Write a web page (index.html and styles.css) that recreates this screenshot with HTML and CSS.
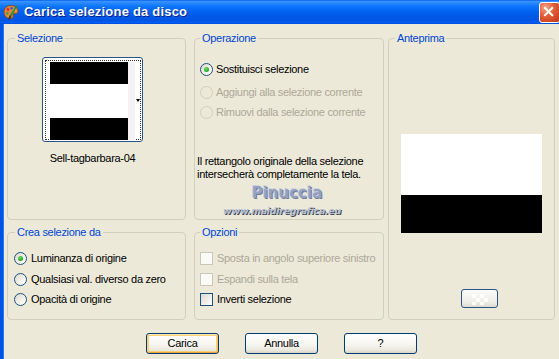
FILE: index.html
```html
<!DOCTYPE html>
<html lang="it">
<head>
<meta charset="utf-8">
<title>Carica selezione da disco</title>
<link rel="stylesheet" href="styles.css">
</head>
<body>
<div class="window">
  <div class="titlebar">
    <svg class="app-icon" viewBox="0 0 16 16" width="16" height="16">
      <path d="M8 1.5c4 0 7 2.4 7 5.6 0 2.2-1.7 2.9-3.2 2.5-1.3-.3-2 .4-1.6 1.6.5 1.5-.6 3.3-3 3.3C3.6 14.5 1 11.6 1 8S3.9 1.5 8 1.5z" fill="#e0883a" stroke="#8a3f12" stroke-width="0.8"/>
      <circle cx="5" cy="5.5" r="1.4" fill="#e8262a"/>
      <circle cx="8.6" cy="4.3" r="1.3" fill="#2a5ce8"/>
      <circle cx="11.8" cy="5.8" r="1.2" fill="#f7e13a"/>
      <circle cx="4.3" cy="9.4" r="1.3" fill="#3aa63a"/>
      <path d="M13.5 2.5 7.2 12.6" stroke="#2f8c3a" stroke-width="1.8" stroke-linecap="round"/>
      <path d="M7.4 12.2 6.2 14.6" stroke="#333" stroke-width="1.6" stroke-linecap="round"/>
    </svg>
    <span class="title">Carica selezione da disco</span>
    <span class="close">
      <svg viewBox="0 0 21 21" width="19" height="19"><path d="M5.5 5.5l8 8M13.5 5.5l-8 8" stroke="#fff" stroke-width="2.2" stroke-linecap="square"/></svg>
    </span>
  </div>
  <div class="frame">
    <div class="client">
      <div class="groups">
        <fieldset class="group g-sel">
          <legend>Selezione</legend>
          <div class="sel-body">
            <div class="thumb">
              <div class="thumb-focus">
                <div class="thumb-img">
                  <div class="bar-black"></div>
                  <div class="bar-white"></div>
                  <div class="bar-black"></div>
                </div>
                <div class="thumb-strip"></div>
                <div class="thumb-arrow"></div>
              </div>
            </div>
            <div class="caption">Sell-tagbarbara-04</div>
          </div>
        </fieldset>

        <fieldset class="group g-op">
          <legend>Operazione</legend>
          <div class="opt op1"><span class="radio checked"></span><span>Sostituisci selezione</span></div>
          <div class="opt op2 disabled"><span class="radio"></span><span>Aggiungi alla selezione corrente</span></div>
          <div class="opt op3 disabled"><span class="radio"></span><span>Rimuovi dalla selezione corrente</span></div>
          <p class="note">Il rettangolo originale della selezione<br>intersecherà completamente la tela.</p>
        </fieldset>

        <fieldset class="group g-prev">
          <legend>Anteprima</legend>
          <div class="preview">
            <div class="pv-white"></div>
            <div class="pv-black"></div>
          </div>
          <div class="mini-btn">
            <svg viewBox="0 0 24 12" width="24" height="12">
              <rect x="4" y="1" width="4" height="4" fill="#fff"/>
              <rect x="12" y="1" width="4" height="4" fill="#fff"/>
              <rect x="8" y="5" width="4" height="4" fill="#fff"/>
              <rect x="16" y="5" width="4" height="4" fill="#fff"/>
              <rect x="4" y="9" width="4" height="3" fill="#fff"/>
              <rect x="12" y="9" width="4" height="3" fill="#fff"/>
            </svg>
          </div>
        </fieldset>

        <fieldset class="group g-crea">
          <legend>Crea selezione da</legend>
          <div class="opt c1"><span class="radio checked"></span><span>Luminanza di origine</span></div>
          <div class="opt c2"><span class="radio"></span><span>Qualsiasi val. diverso da zero</span></div>
          <div class="opt c3"><span class="radio"></span><span>Opacità di origine</span></div>
        </fieldset>

        <fieldset class="group g-opz">
          <legend>Opzioni</legend>
          <div class="opt c1 disabled"><span class="check"></span><span>Sposta in angolo superiore sinistro</span></div>
          <div class="opt c2 disabled"><span class="check"></span><span>Espandi sulla tela</span></div>
          <div class="opt c3"><span class="check"></span><span>Inverti selezione</span></div>
        </fieldset>
      </div>

      <div class="buttons">
        <div class="btn default">Carica</div>
        <div class="btn">Annulla</div>
        <div class="btn">?</div>
      </div>
    </div>
  </div>
  <div class="watermark">
    <span class="wm-name">Pinuccia</span>
    <span class="wm-url">www.maidiregrafica.eu</span>
  </div>
</div>
</body>
</html>
```

FILE: styles.css
```css
* { box-sizing: border-box; }
html, body { margin: 0; padding: 0; }
body {
  width: 559px;
  height: 359px;
  overflow: hidden;
  background: #ece9d8;
  font-family: "Liberation Sans", Arial, sans-serif;
  font-size: 11px;
  letter-spacing: -0.3px;
  color: #000;
}
.window {
  width: 562px;
  height: 359px;
  display: flex;
  flex-direction: column;
  position: relative;
  background: #ece9d8;
}
.titlebar {
  height: 24px;
  flex: none;
  display: flex;
  align-items: center;
  padding-left: 3px;
  background: linear-gradient(to bottom,
    #0058ee 0%, #3a93ff 5%, #2a8aff 12%, #0b74fb 28%, #0266f2 45%,
    #005ae8 65%, #0055e3 85%, #005ef5 95%, #0048d0 100%);
}
.app-icon { flex: none; margin-right: 5px; }
.title {
  flex: 1;
  color: #fff;
  font-weight: bold;
  font-size: 13px;
  letter-spacing: 0.2px;
  line-height: 16px;
  text-shadow: 1px 1px 0 #0a1e8c;
  white-space: nowrap;
}
.close {
  flex: none;
  width: 21px;
  height: 21px;
  margin-right: 2px;
  border: 1px solid #fff;
  border-radius: 3px;
  background: radial-gradient(circle at 30% 25%, #f3a58e 0%, #e3603b 40%, #cc4322 80%, #b8361a 100%);
  display: flex;
  align-items: center;
  justify-content: center;
}
.frame {
  flex: 1;
  display: flex;
  border-left: 3px solid #0054e3;
  box-shadow: inset 1px 0 0 #2a77f0;
}
.client {
  flex: 1;
  padding: 8px 0 0 4px;
}
.groups {
  display: grid;
  grid-template-columns: 179px 8px 190px 4px 167px;
  grid-template-rows: 188px 94px;
  row-gap: 6px;
}
.group {
  margin: 0;
  padding: 0;
  min-width: 0;
  border: 1px solid #d0d0bf;
  border-radius: 4px;
}
.group legend {
  padding: 0 2px;
  color: #0046d5;
  font-size: 11px;
  line-height: 13px;
  margin-left: 6px;
}
.g-sel { grid-column: 1; grid-row: 1; }
.g-op { grid-column: 3; grid-row: 1; }
.g-prev { grid-column: 5; grid-row: 1 / span 2; }
.g-crea { grid-column: 1; grid-row: 2; }
.g-opz { grid-column: 3; grid-row: 2; }
.g-sel legend, .g-crea legend { margin-left: 7px; }
.g-op legend, .g-opz legend { margin-left: 5px; }

/* Selezione */
.sel-body {
  display: flex;
  flex-direction: column;
  align-items: center;
  padding-right: 8px;
}
.thumb {
  margin-top: 12px;
  width: 101px;
  height: 85px;
  border: 1px solid #2b5587;
  border-radius: 3px;
  background: #fff;
  padding: 2px 1px 1px 2px;
}
.thumb-focus {
  height: 100%;
  border: 1px dotted #333;
  display: flex;
  align-items: flex-start;
  padding: 1px 0 0 4px;
}
.thumb-img {
  width: 78px;
  height: 78px;
  display: flex;
  flex-direction: column;
  flex: none;
}
.bar-black { height: 22px; background: #000; }
.bar-white { height: 34px; background: #fff; }
.thumb-strip { width: 7px; height: 78px; background: #f3f3f3; flex: none; }
.thumb-arrow {
  flex: none;
  margin-top: 37px;
  margin-left: 1px;
  width: 0;
  height: 0;
  border-left: 2.5px solid transparent;
  border-right: 2.5px solid transparent;
  border-top: 3px solid #000;
}
.caption {
  margin-top: 10px;
  line-height: 13px;
}

/* options */
.opt {
  display: flex;
  align-items: center;
  height: 13px;
  line-height: 13px;
  white-space: nowrap;
}
.opt.disabled { color: #aca899; }
.g-op .opt { padding-left: 5px; gap: 3px; }
.op1 { margin-top: 18px; }
.op2 { margin-top: 10px; }
.op3 { margin-top: 7px; }
.note {
  margin: 36px 0 0 2px;
  line-height: 13px;
}
.g-crea .opt { padding-left: 6px; gap: 4px; }
.g-opz .opt { padding-left: 5px; gap: 4px; }
.c1 { margin-top: 13px; }
.c2 { margin-top: 8px; }
.c3 { margin-top: 7px; }

.radio {
  flex: none;
  width: 13px;
  height: 13px;
  border-radius: 50%;
  border: 1px solid #1c5180;
  background: linear-gradient(135deg, #dcd8cb 0%, #f2f1ea 55%, #ffffff 100%);
  position: relative;
}
.radio.checked::after {
  content: "";
  position: absolute;
  left: 3px;
  top: 3px;
  width: 5px;
  height: 5px;
  border-radius: 50%;
  background: radial-gradient(circle at 40% 35%, #6fe46f 0%, #2bb12b 55%, #1a8e1a 100%);
}
.disabled .radio {
  border-color: #d2cfc0;
  background: #ece9d8;
}
.check {
  flex: none;
  width: 13px;
  height: 13px;
  border: 1px solid #1c5180;
  background: linear-gradient(135deg, #dcd9d1 0%, #f0efe9 60%, #ffffff 100%);
}
.disabled .check {
  border-color: #cac8bb;
  background: #fafaf6;
}

/* preview */
.preview {
  margin: 89px 0 0 12px;
  width: 141px;
}
.pv-white { height: 61px; background: #fff; }
.pv-black { height: 38px; background: #000; }
.mini-btn {
  margin: 56px 0 0 72px;
  width: 37px;
  height: 19px;
  border: 1px solid #2b5587;
  border-radius: 3px;
  background: linear-gradient(#fbfbf9, #efeee7 70%, #dedbd0);
  display: flex;
  align-items: center;
  justify-content: center;
}
.mini-btn svg { opacity: 0.9; }

/* buttons */
.buttons {
  display: flex;
  gap: 26px;
  margin: 13px 0 0 139px;
}
.btn {
  width: 73px;
  height: 21px;
  border: 1px solid #003c74;
  border-radius: 3px;
  background: linear-gradient(#ffffff 0%, #f6f5f0 55%, #ebe8de 85%, #d9d4c7 100%);
  display: flex;
  align-items: center;
  justify-content: center;
  line-height: 13px;
}
.btn.default {
  box-shadow: inset 0 1px 0 #fee8b4, inset 1px 0 0 #fbd27c, inset -1px 0 0 #f7c05b, inset 0 -1px 0 #eba43a, inset 0 0 0 2px #f9cf78;
}

/* watermark overlay */
.watermark {
  position: absolute;
  left: 220px;
  top: 185px;
  width: 124px;
  display: flex;
  flex-direction: column;
  align-items: center;
  pointer-events: none;
}
.wm-name {
  font-family: "DejaVu Sans", sans-serif;
  font-weight: bold;
  font-size: 15px;
  line-height: 17px;
  margin-left: 10px;
  color: #95a1bd;
  letter-spacing: 0;
  text-shadow: -1px -1px 0 #ccd3e3, 1px 1px 0 #6f7ea0;
}
.wm-url {
  font-family: "DejaVu Sans", sans-serif;
  font-weight: bold;
  font-style: italic;
  font-size: 9.5px;
  line-height: 12px;
  margin-top: 3px;
  color: #b8c0d0;
  letter-spacing: -0.3px;
  text-shadow: 1px 1px 0 #454c5a;
}
```
